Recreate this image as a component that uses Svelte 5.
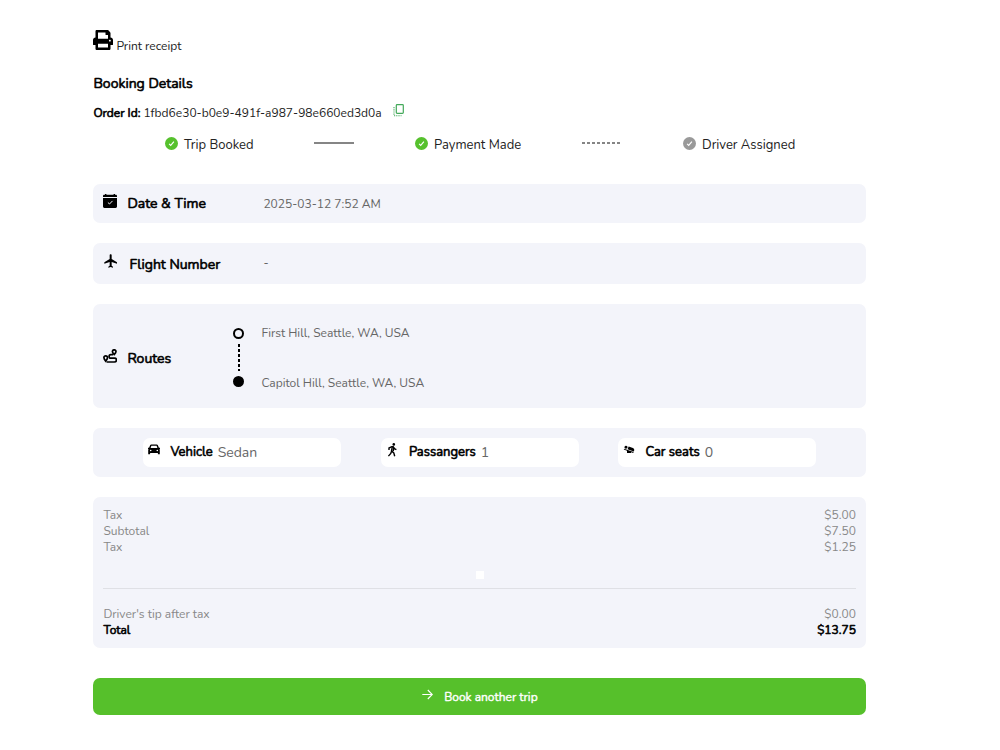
<script>
  const orderId = '1fbd6e30-b0e9-491f-a987-98e660ed3d0a';

  const steps = [
    { name: 'Trip Booked', done: true, cls: 'booked' },
    { name: 'Payment Made', done: true, cls: 'paid' },
    { name: 'Driver Assigned', done: false, cls: 'driver' }
  ];

  const fees = [
    { name: 'Tax', price: '$5.00' },
    { name: 'Subtotal', price: '$7.50' },
    { name: 'Tax', price: '$1.25' }
  ];
</script>

<main>
  <div class="print">
    <svg width="20" height="20" viewBox="0 0 512 512"><path d="M448 192V77.25c0-8.49-3.37-16.62-9.37-22.63L393.37 9.37c-6-6-14.14-9.37-22.63-9.37H96C78.33 0 64 14.33 64 32v160c-35.35 0-64 28.65-64 64v112c0 8.84 7.16 16 16 16h48v96c0 17.67 14.33 32 32 32h320c17.67 0 32-14.33 32-32v-96h48c8.84 0 16-7.16 16-16V256c0-35.35-28.65-64-64-64zm-64 256H128v-96h256v96zm0-224H128V64h192v48c0 8.84 7.16 16 16 16h48v96zm48 72c-13.25 0-24-10.75-24-24 0-13.26 10.75-24 24-24s24 10.74 24 24c0 13.25-10.75 24-24 24z"/></svg>
    <span>Print receipt</span>
  </div>

  <h1>Booking Details</h1>

  <div class="order">
    <b>Order Id:</b>
    <span>{orderId}</span>
    <svg width="11" height="13" viewBox="0 0 11 13" fill="none" stroke="#43a95a">
      <rect x="3.3" y=".6" width="7" height="8.8" rx=".8" stroke-width="1.2"/>
      <path d="M1 3v8.5" stroke-dasharray="1.2 1" stroke-width="1.1"/>
      <path d="M1 11.8h7.5" stroke-dasharray="1.2 1" stroke-width="1.1"/>
    </svg>
  </div>

  <div class="steps">
    {#each steps as step, i}
      {#if i > 0}
        <i class="line" class:dashed={!step.done}></i>
      {/if}
      <div class="step {step.cls}">
        <svg class:done={step.done} width="13" height="13" viewBox="0 0 13 13">
          <circle cx="6.5" cy="6.5" r="6.5"/>
          <path d="M4.1 6.8l1.6 1.6 3.2-3.8" fill="none" stroke="#fff" stroke-width="1.1"/>
        </svg>
        <span>{step.name}</span>
      </div>
    {/each}
  </div>

  <section class="card date">
    <div class="label">
      <svg width="14" height="14" viewBox="0 0 14 14">
        <path d="M0 3V2C0 1.3.6.8 1.3.8H2V0h1.4v.8h7.2V0H12v.8h.7c.7 0 1.3.5 1.3 1.2v1z"/>
        <path d="M0 4h14v8.6c0 .8-.6 1.4-1.4 1.4H1.4C.6 14 0 13.4 0 12.6z"/>
        <path d="M4.9 8.5l1.6 1.5 3-3.1" fill="none" stroke="#f3f4fa"/>
      </svg>
      <h2>Date &amp; Time</h2>
    </div>
    <p>2025-03-12 7:52 AM</p>
  </section>

  <section class="card flight">
    <div class="label">
      <svg width="16" height="16" viewBox="0 0 24 24"><path d="M21 16v-2l-8-5V3.5c0-.83-.67-1.5-1.5-1.5S10 2.67 10 3.5V9l-8 5v2l8-2.5V19l-2 1.5V22l3.5-1 3.5 1v-1.5L13 19v-5.500l8 2.500z"/></svg>
      <h2>Flight Number</h2>
    </div>
    <p>-</p>
  </section>

  <section class="card routes">
    <div class="label">
      <svg width="14" height="14" viewBox="0 0 14 14" fill="none" stroke="#000" stroke-width="1.7">
        <path d="M2.7 12.200S.9 10 .9 8.600a1.800 1.800 0 0 1 3.600 0c0 1.400-1.800 3.600-1.800 3.600z"/>
        <path d="M11.200 5.600S9.400 4 9.400 2.600a1.800 1.800 0 0 1 3.600 0c0 1.400-1.800 3-1.800 3z"/>
        <path d="M10 5.700H7.800a1.700 1.700 0 0 0 0 3.400h3.700a1.900 1.900 0 0 1 0 3.900H3.500"/>
      </svg>
      <h2>Routes</h2>
    </div>
    <div class="track">
      <i class="dot"></i>
      <i class="path"></i>
      <i class="dot end"></i>
    </div>
    <div class="stops">
      <p class="from">First Hill, Seattle, WA, USA</p>
      <p class="to">Capitol Hill, Seattle, WA, USA</p>
    </div>
  </section>

  <section class="card extras">
    <div class="pill vehicle">
      <svg width="12" height="11" viewBox="0 0 12 11">
        <path fill-rule="evenodd" d="M3.300.500h5.400c.6 0 1 .3 1.200.8l1 2.400H12v1.300h-.6c.3.300.4.700.4 1.100v4.100H9.900V8.900H2.100v1.300H.2V6.100c0-.4.1-.8.4-1.100H0V3.700h1.100l1-2.400c.2-.5.6-.8 1.200-.8zM3.400 1.800l-.8 2.100h6.800l-.8-2.100zM2.700 5.700a.8.8 0 1 0 0 1.600.8.8 0 0 0 0-1.600zm6.600 0a.8.8 0 1 0 0 1.600.8.8 0 0 0 0-1.600z"/>
      </svg>
      <b>Vehicle</b>
      <span>Sedan</span>
    </div>
    <div class="pill people">
      <svg width="13" height="14" viewBox="0 0 13 14" fill="none" stroke="#000" stroke-width="1.400">
        <circle cx="7.800" cy="1.400" r="1.300" fill="#000" stroke="none"/>
        <path d="M3 7V5l2.800-1.300h1.400l1.200 2 2 .9"/>
        <path d="M6.300 4l-.8 3.900 2.300 2 .9 3.400M7.900 4.600l-.7 3.400M5.600 7.900l-.8 2.600-2.400 2.600"/>
      </svg>
      <b>Passangers</b>
      <span>1</span>
    </div>
    <div class="pill seats">
      <svg width="12" height="12" viewBox="0 1 24 24"><path d="M22.250 14.290l-.69 1.890L9.200 11.710l2.080-5.660 8.560 3.090c2.100.76 3.180 3.060 2.410 5.150zM1.500 12.140L8 14.480V19h8v-1.630L20.520 19l.69-1.890-19.020-6.860-.69 1.890zm5.800-1.940c1.490-.72 2.120-2.510 1.410-4C7.990 4.710 6.200 4.080 4.700 4.800c-1.490.71-2.120 2.500-1.400 4 .71 1.490 2.500 2.120 4 1.400z"/></svg>
      <b>Car seats</b>
      <span>0</span>
    </div>
  </section>

  <section class="card bill">
    {#each fees as fee}
      <div class="row"><span>{fee.name}</span><span>{fee.price}</span></div>
    {/each}
    <i class="chip"></i>
    <hr>
    <div class="row tip"><span>Driver's tip after tax</span><span>$0.00</span></div>
    <div class="row total"><span>Total</span><span>$13.75</span></div>
  </section>

  <button>
    <svg width="11" height="11" viewBox="0 0 11 11" fill="none" stroke="#fff" stroke-width="1.1"><path d="M.3 5.500h10M5.800 1l4.500 4.500L5.800 10"/></svg>
    <span>Book another trip</span>
  </button>
</main>

<style>
  :global(body) {
    margin: 0;
    background: #fff;
  }

  main, main * {
    box-sizing: border-box;
  }

  main {
    width: 773px;
    margin-left: 93.4px;
    padding-top: 30px;
    font-family: Nunito, Lato, sans-serif;
    font-size: 12px;
    line-height: 16px;
    color: #222;
  }

  svg {
    display: block;
    flex: none;
  }

  h1, h2, p {
    margin: 0;
  }

  /* bold drawn as a stroke so the letters keep their regular widths */
  b, h1, h2, .total {
    color: #000;
    font-weight: 400;
    -webkit-text-stroke: .6px #000;
  }

  .print {
    display: flex;
    height: 24px;
    gap: 3px;
  }

  .print span {
    padding-top: 8px;
  }

  h1 {
    margin-top: 20px;
    font-size: 14px;
    line-height: 20px;
  }

  .order {
    display: flex;
    height: 18px;
    margin-top: 11px;
    gap: 3px;
  }

  .order svg {
    margin: -1px 0 0 8px;
  }

  .steps {
    display: flex;
    align-items: center;
    height: 20px;
    margin: 11px 0 0 71.6px;
  }

  .step {
    display: flex;
    gap: 6px;
    font-size: 13px;
    white-space: nowrap;
  }

  .step span {
    padding-top: 1px;
  }

  .step svg {
    margin-top: 1px;
    fill: #999;
  }

  .step svg.done {
    fill: #56c12d;
  }

  .booked { width: 89px; }
  .paid { width: 107px; }
  .driver { width: 113px; }

  .line {
    width: 40px;
    height: 2px;
    margin: 0 61px 2px 60px;
    background: #858585;
  }

  .line.dashed {
    background: repeating-linear-gradient(90deg, #858585 0 3px, transparent 3px 5px);
  }

  .card {
    display: flex;
    margin-bottom: 20px;
    border-radius: 7px;
    background: #f3f4fa;
    color: #666;
  }

  .label {
    display: flex;
    width: 170px;
    padding-left: 10px;
    gap: 10px;
  }

  h2 {
    font-size: 14px;
    line-height: 20px;
  }

  .date {
    height: 39px;
    margin-top: 30px;
    padding-top: 10px;
  }

  .date p {
    padding-top: 2px;
  }

  .flight {
    height: 41px;
    padding-top: 11px;
  }

  .flight h2 {
    padding-top: 1px;
  }

  .flight svg {
    margin-top: -1px;
  }

  .flight p {
    padding-top: 1px;
  }

  .routes {
    height: 104px;
    padding-top: 21px;
  }

  .routes .label {
    width: 139px;
    padding-top: 24px;
  }

  .track {
    display: flex;
    flex-direction: column;
    align-items: center;
    width: 13px;
    padding-top: 3px;
  }

  .dot {
    width: 11px;
    height: 11px;
    border: 2px solid #000;
    border-radius: 50%;
  }

  .dot.end {
    background: #000;
  }

  .path {
    width: 2px;
    height: 27px;
    margin: 5px 0;
    background: repeating-linear-gradient(#000 0 3px, transparent 3px 5px);
  }

  .stops {
    display: flex;
    flex-direction: column;
    padding-left: 16px;
    gap: 34px;
  }

  .extras {
    height: 49px;
    padding: 10px 50px 0;
    justify-content: space-between;
  }

  .pill {
    display: flex;
    width: 198px;
    height: 29px;
    padding: 5px;
    border-radius: 7px;
    background: #fff;
  }

  .vehicle svg,
  .seats svg {
    margin-top: 1px;
  }

  .pill b {
    margin: 0 5px 0 10px;
    font-size: 13px;
    line-height: 18px;
  }

  .pill span {
    font-size: 14px;
    line-height: 19px;
  }

  .bill {
    display: block;
    height: 151px;
    margin-bottom: 30px;
    padding: 10px 10.5px 0 10px;
    color: #888;
  }

  .row {
    display: flex;
    justify-content: space-between;
  }

  .chip {
    display: block;
    width: 8px;
    height: 8px;
    margin: 16px auto 9px;
    background: #fff;
  }

  hr {
    height: 1px;
    margin: 0 0 17px;
    border: 0;
    background: #dfe0e5;
  }

  button {
    display: flex;
    align-items: flex-start;
    justify-content: center;
    width: 100%;
    height: 37px;
    padding: 11px 0 0;
    gap: 11px;
    border: 0;
    border-radius: 7px;
    background: #56c02b;
    color: #fff;
    font: 12px/16px Nunito, Lato, sans-serif;
    -webkit-text-stroke: .4px #fff;
  }
</style>
